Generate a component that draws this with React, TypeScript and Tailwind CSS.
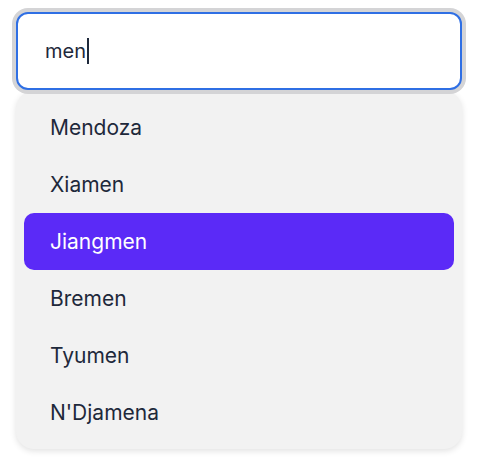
const cities = ['Mendoza', 'Xiamen', 'Jiangmen', 'Bremen', 'Tyumen', "N'Djamena"];

export default function App() {
  const active = 2;
  return (
    <div className="w-[478px] h-[470px] bg-white font-['Inter','Liberation_Sans',sans-serif]">
      <div className="pt-3 px-4">
        <div className="relative z-10 h-[78px] rounded-xl border-2 border-[#2f6fe4] ring-4 ring-[#d4d4d6] bg-white flex items-center pl-[27px]">
          <span className="text-[20px] text-[#1e293b] leading-none">men</span>
          <span className="w-[2px] h-[26px] bg-[#1e293b] ml-[1px]" />
        </div>
        <ul className="mt-px rounded-[18px] bg-[#f2f2f2] shadow-[0_2px_6px_rgba(0,0,0,0.12)] py-2 px-2">
          {cities.map((c, i) => (
            <li
              key={c}
              className={`h-[57px] flex items-center pl-[26px] text-[21px] rounded-[10px] ${
                i === active ? 'bg-[#5b2af7] text-white' : 'text-[#1e293b]'
              }`}
            >
              {c}
            </li>
          ))}
        </ul>
      </div>
    </div>
  );
}
